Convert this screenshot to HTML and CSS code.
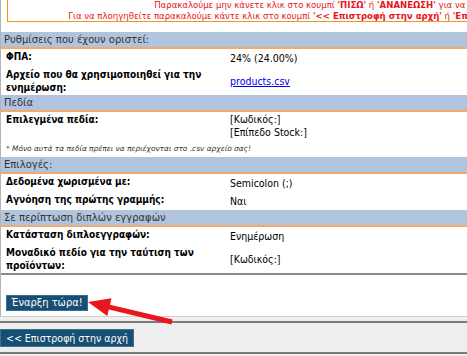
FILE: index.html
```html
<!DOCTYPE html>
<html lang="el">
<head>
    <meta charset="UTF-8">
    <title>Εισαγωγή CSV</title>
    <link rel="stylesheet" href="styles.css">
</head>
<body>
    <div class="page">
        <div class="notice">
            <div>Παρακαλούμε μην κάνετε κλικ στο κουμπί <b>'ΠΙΣΩ'</b> ή <b>'ΑΝΑΝΕΩΣΗ'</b> για να μην διακοπεί η διαδικασία σας.</div>
            <div>Για να πλοηγηθείτε παρακαλούμε κάντε κλικ στο κουμπί <b>'&lt;&lt; Επιστροφή στην αρχή'</b> ή <b>'Επόμενο βήμα'</b> παρακάτω για να συνεχίσετε σωστά.</div>
        </div>

        <table class="settings">
            <tr><td colspan="2" class="head">Ρυθμίσεις που έχουν οριστεί:</td></tr>
            <tr>
                <td class="label">ΦΠΑ:</td>
                <td class="value">24% (24.00%)</td>
            </tr>
            <tr>
                <td class="label">Αρχείο που θα χρησιμοποιηθεί για την ενημέρωση:</td>
                <td class="value"><a href="#">products.csv</a></td>
            </tr>

            <tr><td colspan="2" class="head">Πεδία</td></tr>
            <tr>
                <td class="label">Επιλεγμένα πεδία:</td>
                <td class="value">[Κωδικός:]<br>[Επίπεδο Stock:]</td>
            </tr>
            <tr><td colspan="2" class="note">* Μόνο αυτά τα πεδία πρέπει να περιέχονται στο .csv αρχείο σας!</td></tr>

            <tr><td colspan="2" class="head">Επιλογές:</td></tr>
            <tr>
                <td class="label">Δεδομένα χωρισμένα με:</td>
                <td class="value">Semicolon (;)</td>
            </tr>
            <tr>
                <td class="label">Αγνόηση της πρώτης γραμμής:</td>
                <td class="value">Ναι</td>
            </tr>

            <tr><td colspan="2" class="head">Σε περίπτωση διπλών εγγραφών</td></tr>
            <tr>
                <td class="label">Κατάσταση διπλοεγγραφών:</td>
                <td class="value">Ενημέρωση</td>
            </tr>
            <tr>
                <td class="label">Μοναδικό πεδίο για την ταύτιση των προϊόντων:</td>
                <td class="value">[Κωδικός:]</td>
            </tr>
        </table>

        <div class="actions">
            <button class="btn">Έναρξη τώρα!</button>
        </div>
    </div>

    <div class="footer">
        <button class="btn btn-back">&lt;&lt; Επιστροφή στην αρχή</button>
    </div>

    <!-- βέλος σήμανσης πάνω από το κουμπί -->
    <svg class="arrow" width="100" height="40" viewBox="0 0 100 40">
        <polygon points="8,12 31.5,8.3 30,14.7 92.6,29.6 91.4,34.4 28.8,19.5 27.3,25.9" fill="#e8171d"/>
    </svg>
</body>
</html>
```

FILE: styles.css
```css
body {
    margin: 0;
    font-family: "DejaVu Sans", Verdana, sans-serif;
    font-size: 10px;
    color: #000;
    background: #eeeeee;
    overflow: hidden;
}
.page {
    background: #fff;
    border-left: 1px solid #b5b5b5;
    border-bottom: 1px solid #d0d0d0;
}
.notice {
    margin: -1px -282px 0 6px;
    border: 1px solid #f7941d;
    border-top: none;
    color: #e8141b;
    font-family: "DejaVu Sans Condensed", "DejaVu Sans", sans-serif;
    font-size: 9.5px;
    line-height: 11px;
    text-align: center;
    white-space: nowrap;
}
.settings {
    width: 100%;
    margin-top: 10px;
    border-collapse: collapse;
    border-bottom: 2px solid #8a8a8a;
}
.settings td {
    padding: 1px 5px;
    line-height: 13px;
    height: 16px;
}
.settings td.head {
    background: #b0c4de;
    border-bottom: 2px solid #f6a866;
    color: #333;
    font-size: 10px;
    padding: 1px 3px;
    height: 13px;
}
.label {
    width: 214px;
    font-family: "DejaVu Sans Condensed", "DejaVu Sans", sans-serif;
    font-weight: bold;
    vertical-align: top;
}
.value {
    font-family: "DejaVu Sans Condensed", "DejaVu Sans", sans-serif;
    font-size: 10.5px;
    vertical-align: middle;
}
.value a {
    color: #0000ee;
}
.settings td.note {
    font-size: 7.4px;
    font-style: italic;
    color: #333;
    padding: 2px 5px;
    height: 13px;
}
.actions {
    padding: 20px 5px 5px;
}
.btn {
    background: #174e73;
    color: #fff;
    border: 1px solid #3d6f91;
    font-family: "DejaVu Sans Condensed", "DejaVu Sans", sans-serif;
    font-size: 11px;
    line-height: 14px;
    padding: 0 4px;
}
.footer {
    margin-top: 4px;
    background: #eeeeee;
    border-top: 2px solid #7a7a7a;
    border-bottom: 2px solid #7a7a7a;
    padding: 6px 0 5px;
}
.btn-back {
    font-size: 10.5px;
    line-height: 16px;
    padding: 0 5px;
}
.arrow {
    position: absolute;
    left: 80px;
    top: 290px;
}
```
